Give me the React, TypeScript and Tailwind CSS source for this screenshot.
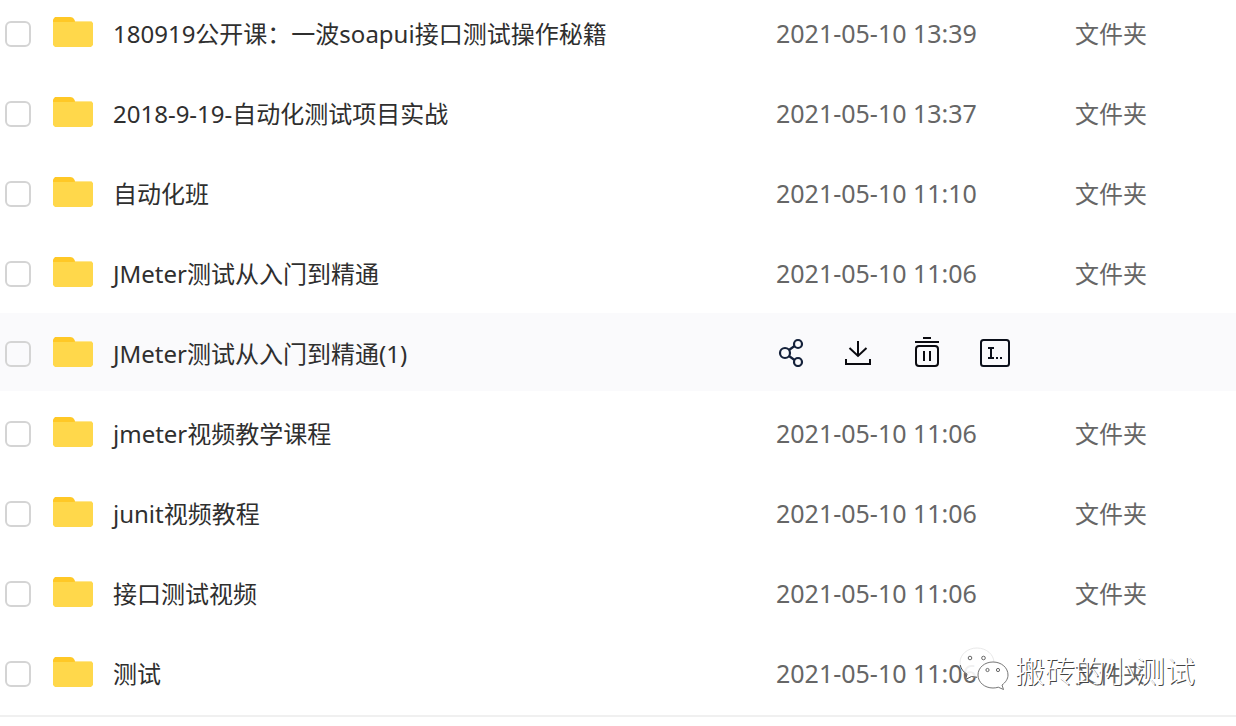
interface FileItem {
  name: string;
  modified: string;
  active?: boolean;
}

const files: FileItem[] = [
  { name: '180919公开课：一波soapui接口测试操作秘籍', modified: '2021-05-10 13:39' },
  { name: '2018-9-19-自动化测试项目实战', modified: '2021-05-10 13:37' },
  { name: '自动化班', modified: '2021-05-10 11:10' },
  { name: 'JMeter测试从入门到精通', modified: '2021-05-10 11:06' },
  { name: 'JMeter测试从入门到精通(1)', modified: '2021-05-10 11:06', active: true },
  { name: 'jmeter视频教学课程', modified: '2021-05-10 11:06' },
  { name: 'junit视频教程', modified: '2021-05-10 11:06' },
  { name: '接口测试视频', modified: '2021-05-10 11:06' },
  { name: '测试', modified: '2021-05-10 11:06' },
];

function FolderIcon() {
  return (
    <svg className="shrink-0" width="40" height="30" viewBox="0 0 40 30" aria-hidden="true">
      <path d="M0 2.500L2 0h15c2 0 3.200.8 4 2l1.500 3L20 12H0z" fill="#ffc826" />
      <path d="M0 5h19.500c1 0 2-.6 3-.6H38.500L40 6V28l-2 2H2l-2-2z" fill="#ffd84b" />
      <path d="M22.500 4.500H38.500" stroke="#ffe78f" strokeWidth="1" />
    </svg>
  );
}

function ShareIcon() {
  return (
    <svg width="30" height="30" viewBox="0 0 30 30" fill="none" stroke="#14213a" strokeWidth="2.200">
      <circle cx="9" cy="16" r="5" />
      <circle cx="22" cy="7" r="4" />
      <circle cx="22" cy="25" r="4" />
      <path d="M13 13l5.500-4M13 19l5.500 4" />
    </svg>
  );
}

function DownloadIcon() {
  return (
    <svg width="30" height="30" viewBox="0 0 30 30" fill="none" stroke="#0b0b10" strokeWidth="2">
      <path d="M14 4v15M5.500 11l8.500 8 8.500-8M2 22v5h24v-5" />
    </svg>
  );
}

function TrashIcon() {
  return (
    <svg width="30" height="30" viewBox="0 0 30 30" fill="none" stroke="#0b0b10" strokeWidth="2">
      <path d="M11 1h8M3 5h24M12 14v10M18 14v10" />
      <rect x="4" y="9" width="22" height="20" rx="3" />
    </svg>
  );
}

function RenameIcon() {
  return (
    <svg width="30" height="30" viewBox="0 0 30 30" fill="none" stroke="#0b0f1a" strokeWidth="2">
      <rect x="1" y="3" width="28" height="26" rx="2.500" />
      <path d="M8 11h6M11 11v10M8 21h6M16 21h2M20 21h2" />
    </svg>
  );
}

function WechatIcon() {
  return (
    <svg className="shrink-0" width="50" height="44" viewBox="0 0 50 44" aria-hidden="true">
      <path
        d="M18 1C8.500 1 1 7.500 1 15.500c0 5 2.700 9 7 11.700L6.500 32.500l6-3c2 .6 3.700.8 5.500.8 9.500 0 17-6.300 17-14.500S27.500 1 18 1z"
        fill="#fff"
        fillOpacity="0.9"
        stroke="#dedede"
        strokeWidth="0.7"
      />
      <path d="M1.200 18c.8 4 3.300 7 6.800 9.200L6.500 32.500l6-3 5.500.8" fill="none" stroke="#555" />
      <path
        d="M34 15c-8.500 0-15 5.700-15 13s6.500 13 15 13c2 0 3.700-.3 5.300-.8l5.200 2.300-1.500-4.500c3.500-2.500 6-6 6-10 0-7.300-6.500-13-15-13z"
        fill="#fff"
        stroke="#666"
        strokeWidth="0.9"
      />
      <g fill="#fff" stroke="#666" strokeWidth="1">
        <circle cx="11" cy="11" r="1.800" />
        <circle cx="24.500" cy="11" r="1.800" />
        <circle cx="28.500" cy="23" r="1.600" />
        <circle cx="39" cy="23" r="1.600" />
      </g>
    </svg>
  );
}

function RowActions() {
  return (
    <div className="flex gap-[38px]">
      <button type="button" aria-label="分享"><ShareIcon /></button>
      <button type="button" aria-label="下载"><DownloadIcon /></button>
      <button type="button" aria-label="删除"><TrashIcon /></button>
      <button type="button" aria-label="重命名"><RenameIcon /></button>
    </div>
  );
}

function FileRow({ file, index }: { file: FileItem; index: number }) {
  return (
    <tr className={file.active ? 'h-20 bg-[#fafafc]' : 'h-20 bg-white'}>
      <td className="border-b-2 border-white pl-[5px] pt-1">
        <input
          id={`file-${index}`}
          type="checkbox"
          aria-label={file.name}
          className="block size-[26px] appearance-none rounded-md border-2 border-[#d4d4d4]"
        />
      </td>
      <td className="border-b-2 border-white">
        <a href="#" className="flex items-center gap-5 text-[#2f2f2f]">
          <FolderIcon />
          <span className="whitespace-nowrap pt-1">{file.name}</span>
        </a>
      </td>
      {file.active ? (
        <td colSpan={2} className="border-b-2 border-white">
          <RowActions />
        </td>
      ) : (
        <>
          <td className="whitespace-nowrap border-b-2 border-white pt-1 text-[25px] text-[#666]">{file.modified}</td>
          <td className="whitespace-nowrap border-b-2 border-white pt-1 text-[#666]">文件夹</td>
        </>
      )}
    </tr>
  );
}

export default function App() {
  return (
    <div className="overflow-hidden bg-white font-['Noto_Sans','Noto_Sans_CJK_SC',sans-serif] text-2xl">
      <main className="relative -mt-[7px] border-b-2 border-[#f0f0f0] pb-[2px]">
        <table className="w-full table-fixed border-separate border-spacing-0">
          <colgroup>
            <col className="w-[53px]" />
            <col />
            <col className="w-[299px]" />
            <col className="w-[161px]" />
          </colgroup>
          <tbody>
            {files.map((file, index) => (
              <FileRow key={file.name} file={file} index={index} />
            ))}
          </tbody>
        </table>

        {/* Account watermark over the last row */}
        <div className="pointer-events-none absolute bottom-6 right-[41px] flex items-center gap-[6px]">
          <WechatIcon />
          <span className="whitespace-nowrap pt-1 text-3xl font-light text-white [text-shadow:1px_1px_0_#444]">
            搬砖的小测试
          </span>
        </div>
      </main>
    </div>
  );
}
